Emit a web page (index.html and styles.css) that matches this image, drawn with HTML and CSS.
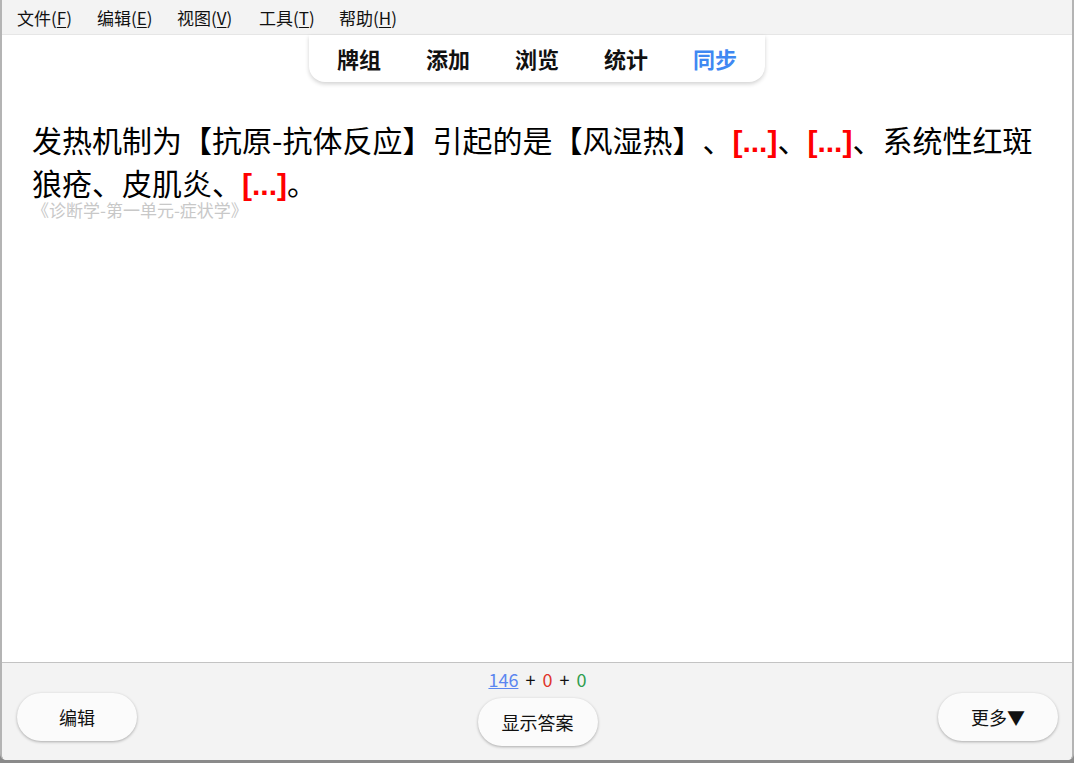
FILE: index.html
```html
<!DOCTYPE html>
<html>
<head>
  <title>Anki</title>
  <link rel="stylesheet" href="styles.css">
</head>
<body>

  <div class="window">
    <div class="menubar">
      <span class="menu-item">文件(<u>F</u>)</span>
      <span class="menu-item">编辑(<u>E</u>)</span>
      <span class="menu-item">视图(<u>V</u>)</span>
      <span class="menu-item">工具(<u>T</u>)</span>
      <span class="menu-item">帮助(<u>H</u>)</span>
    </div>

    <div class="content">
      <div class="toolbar-row">
        <div class="toolbar">
          <span class="tab">牌组</span>
          <span class="tab">添加</span>
          <span class="tab">浏览</span>
          <span class="tab">统计</span>
          <span class="tab sync">同步</span>
        </div>
      </div>

      <div class="card">
        <div class="question">发热机制为【抗原-抗体反应】引起的是【风湿热】、<span class="cloze">[...]</span>、<span class="cloze">[...]</span>、系统性红斑狼疮、皮肌炎、<span class="cloze">[...]</span>。</div>
        <div class="source">《诊断学-第一单元-症状学》</div>
      </div>
    </div>

    <div class="bottombar">
      <div class="side">
        <button class="btn">编辑</button>
      </div>
      <div class="middle">
        <div class="counts"><a class="new">146</a> + <span class="learn">0</span> + <span class="review">0</span></div>
        <button class="btn">显示答案</button>
      </div>
      <div class="side right">
        <button class="btn">更多▼</button>
      </div>
    </div>
  </div>

</body>
</html>
```

FILE: styles.css
```css
html, body {
  margin: 0;
  padding: 0;
  height: 100%;
  background: #8a8a8a;
}
body {
  font-family: "Noto Sans CJK SC", "Noto Sans", sans-serif;
  text-spacing-trim: space-all;
}
.window {
  height: 760px;
  display: flex;
  flex-direction: column;
  border-left: 2px solid #b4b4b4;
  border-right: 2px solid #b4b4b4;
  border-radius: 0 0 6px 6px;
  overflow: hidden;
  background: #ffffff;
}
.menubar {
  height: 34px;
  background: #f3f3f3;
  border-bottom: 1px solid #e6e6e6;
  display: flex;
  align-items: center;
  padding-left: 15px;
  font-size: 17px;
  color: #111;
}
.menu-item {
  min-width: 80px;
}
.menu-item:nth-child(3) {
  min-width: 82px;
}
.menu-item u {
  text-decoration-thickness: 1px;
  text-underline-offset: 2px;
}
.content {
  flex: 1;
  background: #fff;
  min-height: 0;
}
.toolbar-row {
  display: flex;
  justify-content: center;
}
.toolbar {
  display: flex;
  gap: 45px;
  padding: 9px 28px 9px 28px;
  background: #fff;
  border-radius: 0 0 16px 16px;
  box-shadow: 0 2px 4px rgba(0, 0, 0, 0.18);
}
.tab {
  font-size: 22px;
  font-weight: bold;
  line-height: 29px;
  color: #111;
}
.tab.sync {
  color: #3f88f2;
}
.card {
  padding: 37px 28px 0 30px;
}
.question {
  font-size: 30px;
  line-height: 41px;
  color: #000;
}
.cloze {
  color: #ff0000;
  font-weight: bold;
  font-family: "Liberation Sans", "Noto Sans CJK SC", sans-serif;
}
.source {
  font-size: 17px;
  line-height: 20px;
  color: #c8c8c8;
  margin-top: -5px;
}
.bottombar {
  height: 97px;
  background: #f3f3f3;
  border-top: 1px solid #c3c3c3;
  display: flex;
  justify-content: space-between;
  padding: 0 14px 0 15px;
}
.side {
  padding-top: 30px;
  width: 130px;
}
.side.right {
  display: flex;
  justify-content: flex-end;
}
.middle {
  display: flex;
  flex-direction: column;
  align-items: center;
}
.counts {
  font-size: 18px;
  line-height: 22px;
  margin-top: 5px;
  margin-bottom: 8px;
  color: #111;
  word-spacing: 3px;
}
.new {
  color: #5b86f0;
  text-decoration: underline;
}
.learn {
  color: #e0352b;
}
.review {
  color: #2e9e4e;
}
.btn {
  width: 120px;
  height: 48px;
  border: none;
  border-radius: 24px;
  background: #fbfbfb;
  box-shadow: 0 1px 3px rgba(0, 0, 0, 0.3);
  font-family: "Noto Sans CJK SC", sans-serif;
  font-size: 18px;
  color: #111;
}
```
